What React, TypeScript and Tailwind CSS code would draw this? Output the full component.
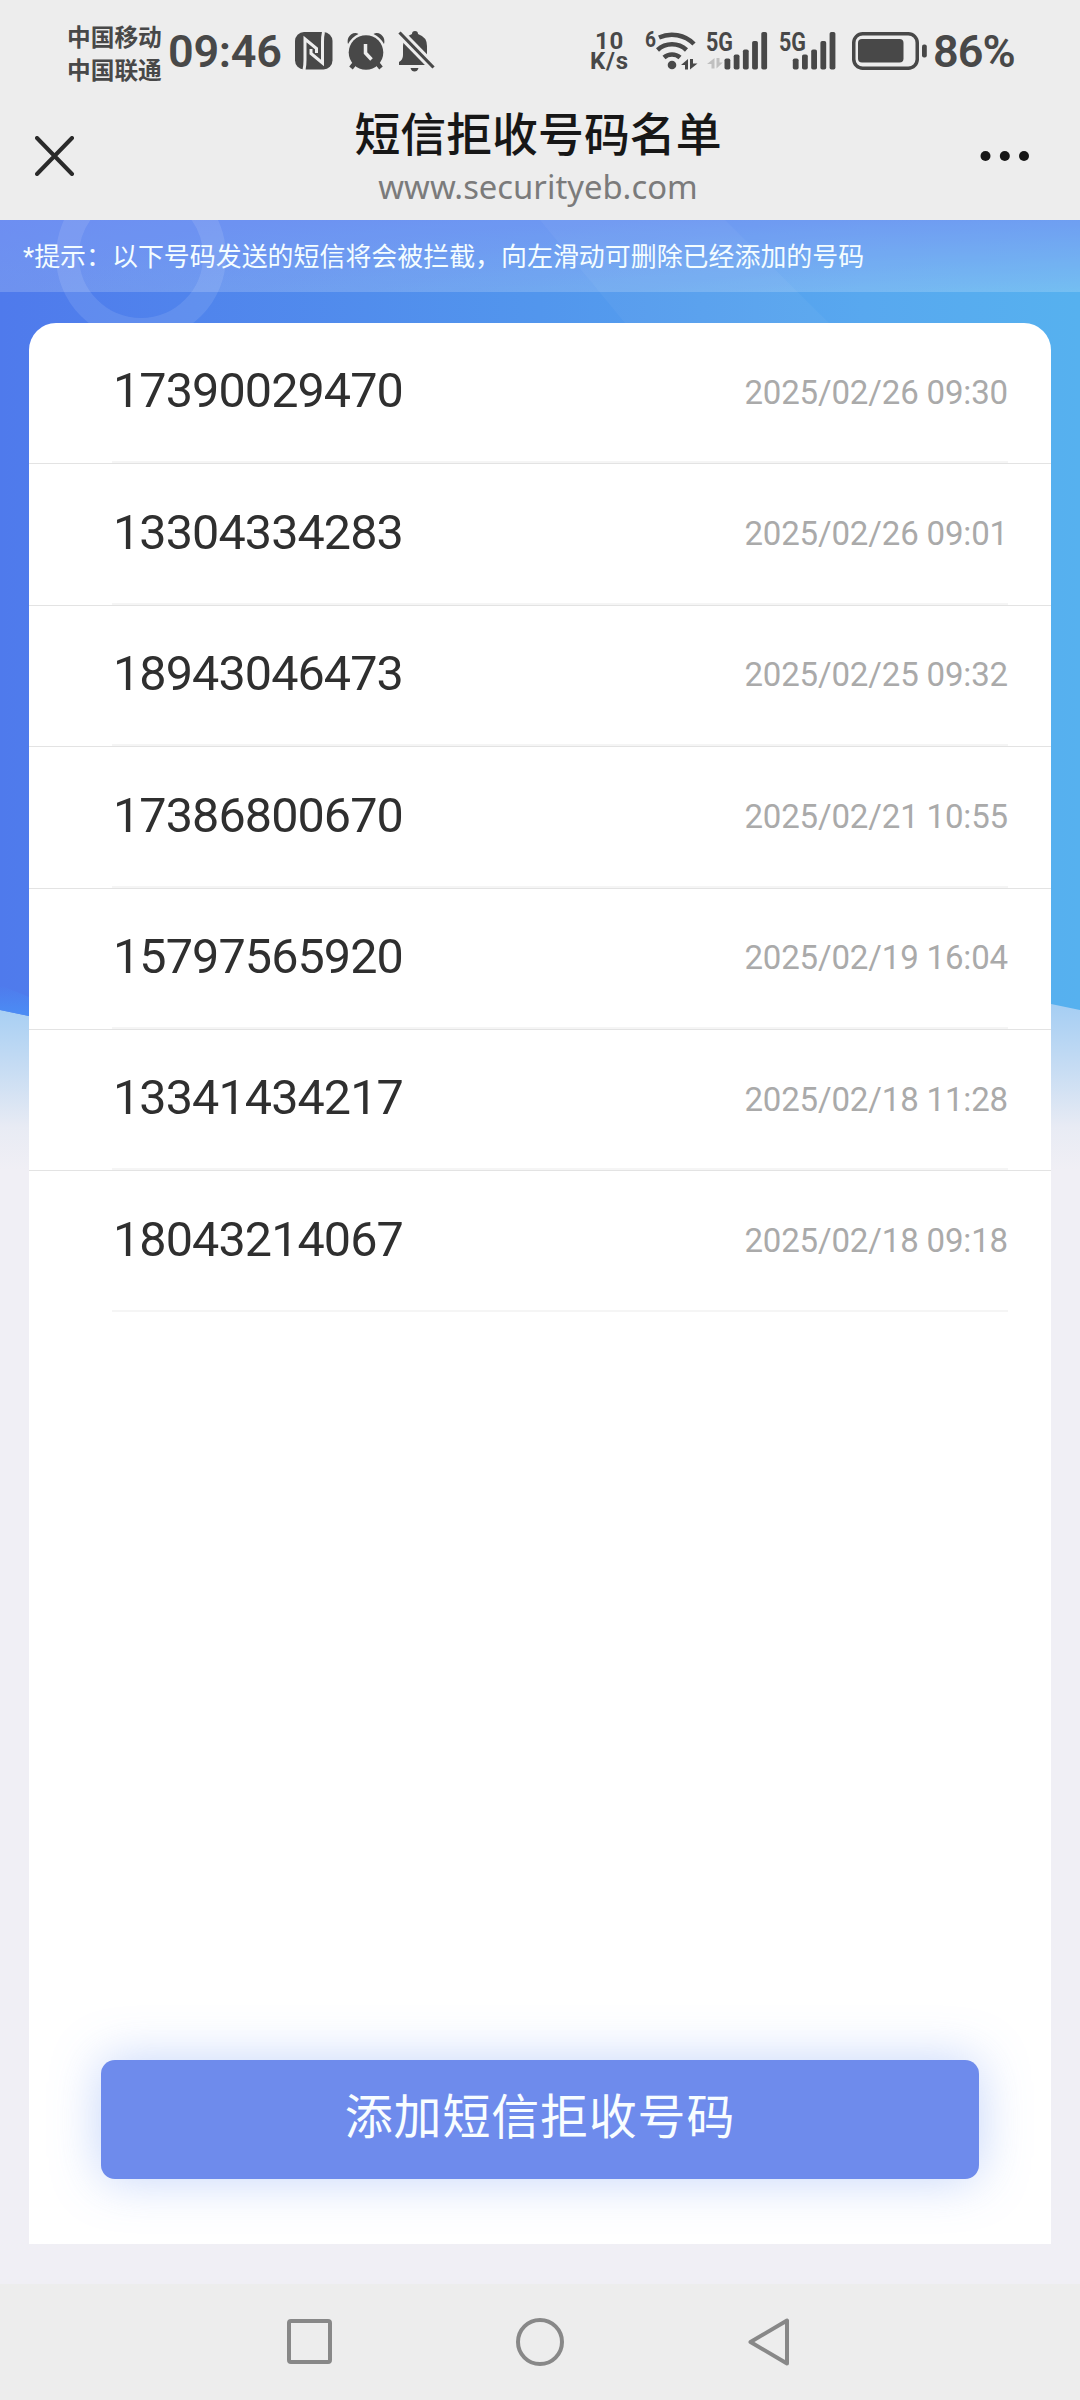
const records = [
  { phone: '17390029470', time: '2025/02/26 09:30' },
  { phone: '13304334283', time: '2025/02/26 09:01' },
  { phone: '18943046473', time: '2025/02/25 09:32' },
  { phone: '17386800670', time: '2025/02/21 10:55' },
  { phone: '15797565920', time: '2025/02/19 16:04' },
  { phone: '13341434217', time: '2025/02/18 11:28' },
  { phone: '18043214067', time: '2025/02/18 09:18' },
];

function NfcIcon() {
  return (
    <svg width="38" height="38" viewBox="0 0 38 38">
      <rect width="37.5" height="37.5" rx="9" fill="#484848" />
      <path
        d="M9 38Q10 34 10 28V7L21.500 16.500V21M28.500 0Q27.500 4 27.500 10V31L16 21.500V17"
        fill="none"
        stroke="#ededed"
        strokeWidth="3"
      />
    </svg>
  );
}

function AlarmIcon() {
  return (
    <svg width="38" height="38" viewBox="0 0 38 38">
      <circle cx="19" cy="20.5" r="17.3" fill="#484848" />
      <path d="M1 12Q-.5 6 4 2.500Q8 0 11.500 2Q5 5 1 12ZM37 12Q38.500 6 34 2.500Q30 0 26.500 2Q33 5 37 12Z" fill="#484848" />
      <path d="M8 31L4 36M30 31L34 36" stroke="#484848" strokeWidth="4.500" />
      <path d="M18.500 12V21L24.500 27.500" stroke="#ededed" strokeWidth="3.500" fill="none" />
    </svg>
  );
}

function BellOffIcon() {
  return (
    <svg width="38" height="42" viewBox="0 0 38 42">
      <path d="M14 4q0-3 3-3t3 3q9 3 9 12v10l6 9H1v-3q4-2 4-7V16q0-9 9-12z" fill="#484848" />
      <path d="M12.500 38h8q-1 3.500-4 3.500t-4-3.500z" fill="#484848" />
      <path d="M-3 -2L40 42" stroke="#ededed" strokeWidth="9" />
      <path d="M1.500 2.500L35.500 37.500" stroke="#484848" strokeWidth="3.200" />
    </svg>
  );
}

function WifiIcon() {
  return (
    <svg width="54" height="62" viewBox="0 -10 54 62" fill="none" stroke="#484848" strokeWidth="4.500">
      <text x="0" y="17" fontSize="22" fontWeight="700" fill="#484848" stroke="none" textLength="11" lengthAdjust="spacingAndGlyphs">
        6
      </text>
      <path d="M14 7.500A31 31 0 0 1 49 14M12.500 20A21.500 21.500 0 0 1 41.500 20M19 27.500A12 12 0 0 1 35 27.500" />
      <circle cx="27" cy="35" r="4.300" fill="#484848" stroke="none" />
      <path d="M43 29v10.500h-3v-4.500h-4zM45 29h3v4.500h4.500l-7.500 6z" fill="#484848" stroke="none" />
    </svg>
  );
}

function SignalIcon({ arrows = false }: { arrows?: boolean }) {
  // arrows: the idle data indicator under the 5G label
  const left = arrows ? 17.5 : 12.8;
  const heights = [11, 15, 20, 28.5, 37.5];
  return (
    <svg width="64" height="60" viewBox="-2 -10 64 60" fill="#484848">
      <text x="-1" y="19.500" fontSize="26" fontWeight="700" textLength="27" lengthAdjust="spacingAndGlyphs">
        5G
      </text>
      {arrows && <path d="M7.500 27v10.500h-3v-4.500h-4.500zM9.500 27h3v4.500h3.300l-6.300 6z" fill="#c0c0c0" />}
      {heights.map((h, i) => (
        <rect key={h} x={left + i * 9.2} y={38.5 - h} width="5.800" height={h} rx="1.800" />
      ))}
    </svg>
  );
}

function BatteryIcon() {
  return (
    <svg width="76" height="38" viewBox="0 0 76 38">
      <rect x="1.750" y="1.750" width="63.500" height="34.500" rx="9" fill="none" stroke="#484848" strokeWidth="3.500" />
      <rect x="6" y="7" width="45.500" height="23.500" rx="4" fill="#484848" />
      <rect x="70" y="12.500" width="4.800" height="13" rx="2" fill="#484848" />
    </svg>
  );
}

function StatusBar() {
  return (
    <div className="flex h-[102px] items-center pl-[67px] whitespace-nowrap text-[#484848]">
      <div className="w-[101px] pt-[7px] text-[23.7px] leading-[33px] font-semibold">
        <div>中国移动</div>
        <div>中国联通</div>
      </div>
      <div className="w-[127px] text-[45px] leading-none font-semibold tracking-[-0.3px]">09:46</div>
      <NfcIcon />
      <div className="ml-[14px]">
        <AlarmIcon />
      </div>
      <div className="ml-[13px]">
        <BellOffIcon />
      </div>
      <div className="ml-[152px] w-[43px] text-center text-[24px] leading-[20px] font-bold tracking-[0.8px]">
        <div>10</div>
        <div>K/s</div>
      </div>
      <div className="ml-[14px]">
        <WifiIcon />
      </div>
      <div className="ml-[6px]">
        <SignalIcon arrows />
      </div>
      <div className="ml-[9px]">
        <SignalIcon />
      </div>
      <div className="ml-[10px]">
        <BatteryIcon />
      </div>
      <div className="ml-[5px] text-[45px] leading-none font-semibold tracking-[-1px]">86%</div>
    </div>
  );
}

function TitleBar() {
  return (
    <div className="flex h-[118px] items-start justify-between pr-[50px] pl-[35px]">
      <svg className="mt-[34px]" width="40" height="40" viewBox="0 0 40 40">
        <path d="M2 2L37 38M37 2L2 38" stroke="#2a2a2a" strokeWidth="4" strokeLinecap="round" />
      </svg>
      <div className="ml-[21px] flex w-[400px] flex-col items-center pt-[3px]">
        <h1 className="text-[45.9px] leading-[60px] font-medium whitespace-nowrap text-[#171717]">短信拒收号码名单</h1>
        <p className="font-['Noto_Sans'] text-[32.8px] leading-[44px] text-[#7b7b7b]">www.securityeb.com</p>
      </div>
      <svg className="mt-[48px]" width="50" height="12" viewBox="0 0 50 12" fill="#171717">
        <circle cx="5.500" cy="6" r="5" />
        <circle cx="24.800" cy="6" r="5" />
        <circle cx="44" cy="6" r="5" />
      </svg>
    </div>
  );
}

function HeroBackground() {
  return (
    <svg className="col-start-1 row-start-1" width="1080" height="960" viewBox="0 220 1080 960">
      <defs>
        <linearGradient id="sky" x1="0" y1="0" x2="1" y2="0">
          <stop offset="0" stopColor="#4f7aec" />
          <stop offset="0.5" stopColor="#5296ed" />
          <stop offset="0.8" stopColor="#58a8ef" />
          <stop offset="1" stopColor="#56b1ef" />
        </linearGradient>
        <linearGradient id="top" x1="0" y1="0" x2="0" y2="1">
          <stop offset="0" stopColor="#4c74f0" stopOpacity="0.65" />
          <stop offset="1" stopColor="#4c74f0" stopOpacity="0" />
        </linearGradient>
        <linearGradient id="fade" x1="0" y1="0" x2="0" y2="1">
          <stop offset="0" stopColor="#a3cdf3" />
          <stop offset="0.4" stopColor="#c6dcf3" />
          <stop offset="0.75" stopColor="#e8ebf4" />
          <stop offset="1" stopColor="#f0eff5" />
        </linearGradient>
        <linearGradient id="edge" x1="0" y1="0" x2="0" y2="1">
          <stop offset="0" stopColor="#4b8df5" stopOpacity="0" />
          <stop offset="1" stopColor="#4b8df5" />
        </linearGradient>
      </defs>
      <rect y="1000" width="1080" height="170" fill="url(#fade)" />
      <path d="M0 220H1080V1010L1051 1004L540 960L29 1016L0 1010Z" fill="url(#sky)" />
      <rect y="220" width="1080" height="72" fill="url(#top)" />
      <path d="M0 985L29 997V1016L0 1010Z" fill="url(#edge)" />
      <path d="M540 220H725L829 323H625Z" fill="#fff" fillOpacity="0.04" />
      <circle cx="141" cy="256" r="73.500" fill="none" stroke="#fff" strokeOpacity="0.1" strokeWidth="23" />
    </svg>
  );
}

export default function App() {
  return (
    <div className="flex h-[2400px] w-[1080px] flex-col overflow-hidden bg-[#f0eff5] font-[Roboto,'Noto_Sans_CJK_SC',sans-serif]">
      <header className="h-[220px] shrink-0 bg-[#ededed]">
        <StatusBar />
        <TitleBar />
      </header>

      <main className="grid h-[2064px] shrink-0 grid-cols-1 grid-rows-1">
        <HeroBackground />
        <div className="z-10 col-start-1 row-start-1 flex flex-col">
          <p className="h-[72px] bg-white/18 pl-[23px] text-[25.95px] leading-[75px] whitespace-nowrap text-[#f4fdff]">
            *提示：以下号码发送的短信将会被拦截，向左滑动可删除已经添加的号码
          </p>

          <section className="mx-[29px] mt-[31px] flex h-[1921px] flex-col justify-between overflow-hidden rounded-t-[27px] bg-white">
            <ul>
              {records.map((r) => (
                <li key={r.phone} className="h-[141.4px] border-b border-[#e3e3e3] pr-[43px] pl-[83px] last:border-transparent">
                  <div className="flex h-full items-center justify-between border-b-2 border-[#f5f5f5]">
                    <span className="pb-px pl-px text-[48.5px] leading-none tracking-[-0.9px] text-[#2f2f2f]">{r.phone}</span>
                    <span className="text-[33px] leading-none tracking-[-0.15px] text-[#aaaaaa]">{r.time}</span>
                  </div>
                </li>
              ))}
            </ul>

            <button className="mx-[72px] mb-[65px] h-[119px] rounded-[14px] bg-[#6e8bec] pb-[3px] text-[48px] tracking-[0.8px] text-[#f8fdff] shadow-[0_0_50px_rgba(90,135,240,0.36)]">
              添加短信拒收号码
            </button>
          </section>
        </div>
      </main>

      <nav className="flex h-[116px] shrink-0 items-center bg-[#ededed] pb-[1px] pl-[286px]">
        <svg width="504" height="50" viewBox="0 0 504 50" fill="none" stroke="#888" strokeWidth="4" strokeLinejoin="round">
          <rect x="3" y="4" width="41" height="41" rx="2" />
          <circle cx="254" cy="25" r="22" />
          <path d="M501 3.500V46.500L464.500 25Z" />
        </svg>
      </nav>
    </div>
  );
}
